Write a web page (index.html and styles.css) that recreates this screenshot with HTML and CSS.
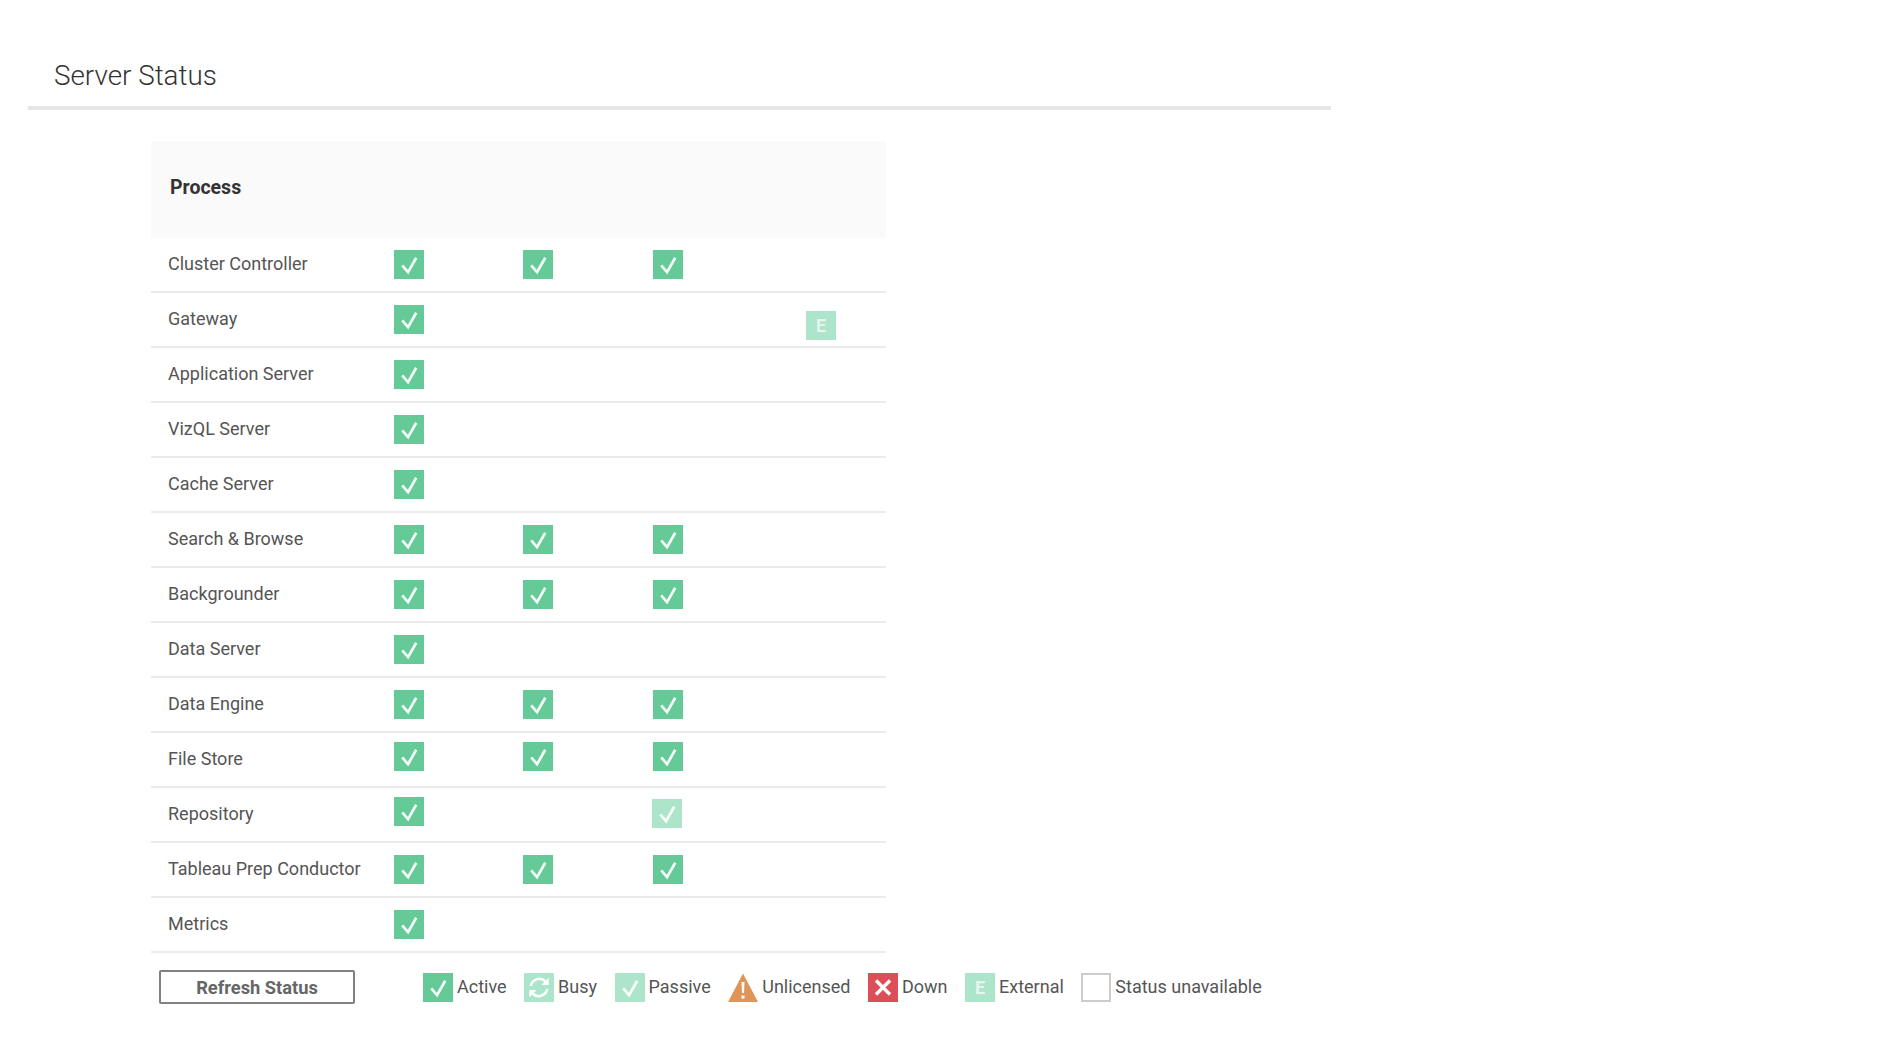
FILE: index.html
```html
<!DOCTYPE html>
<html lang="en">
<head>
    <meta charset="UTF-8">
    <title>Server Status</title>
    <link rel="stylesheet" href="styles.css">
</head>
<body>
    <svg class="defs" aria-hidden="true">
        <symbol id="tick" viewBox="0 0 30 30"><path d="M8 16 L14 23 L22.5 8" fill="none" stroke="#fff" stroke-opacity=".92" stroke-width="2.8"/></symbol>
    </svg>
    <header class="page-head">
        <h1>Server Status</h1>
    </header>
    <section class="status">
        <div class="table-head">Process</div>
        <div class="row">
            <span class="name">Cluster Controller</span>
            <svg class="box active"><use href="#tick"/></svg>
            <svg class="box active"><use href="#tick"/></svg>
            <svg class="box active"><use href="#tick"/></svg>
        </div>
        <div class="row">
            <span class="name">Gateway</span>
            <svg class="box active"><use href="#tick"/></svg>
            <span></span>
            <span></span>
            <div class="box external low">E</div>
        </div>
        <div class="row">
            <span class="name">Application Server</span>
            <svg class="box active"><use href="#tick"/></svg>
        </div>
        <div class="row">
            <span class="name">VizQL Server</span>
            <svg class="box active"><use href="#tick"/></svg>
        </div>
        <div class="row">
            <span class="name">Cache Server</span>
            <svg class="box active"><use href="#tick"/></svg>
        </div>
        <div class="row">
            <span class="name">Search &amp; Browse</span>
            <svg class="box active"><use href="#tick"/></svg>
            <svg class="box active"><use href="#tick"/></svg>
            <svg class="box active"><use href="#tick"/></svg>
        </div>
        <div class="row">
            <span class="name">Backgrounder</span>
            <svg class="box active"><use href="#tick"/></svg>
            <svg class="box active"><use href="#tick"/></svg>
            <svg class="box active"><use href="#tick"/></svg>
        </div>
        <div class="row">
            <span class="name">Data Server</span>
            <svg class="box active"><use href="#tick"/></svg>
        </div>
        <div class="row">
            <span class="name">Data Engine</span>
            <svg class="box active"><use href="#tick"/></svg>
            <svg class="box active"><use href="#tick"/></svg>
            <svg class="box active"><use href="#tick"/></svg>
        </div>
        <div class="row raised">
            <span class="name">File Store</span>
            <svg class="box active"><use href="#tick"/></svg>
            <svg class="box active"><use href="#tick"/></svg>
            <svg class="box active"><use href="#tick"/></svg>
        </div>
        <div class="row raised">
            <span class="name">Repository</span>
            <svg class="box active"><use href="#tick"/></svg>
            <span></span>
            <svg class="box passive nudge"><use href="#tick"/></svg>
        </div>
        <div class="row">
            <span class="name">Tableau Prep Conductor</span>
            <svg class="box active"><use href="#tick"/></svg>
            <svg class="box active"><use href="#tick"/></svg>
            <svg class="box active"><use href="#tick"/></svg>
        </div>
        <div class="row">
            <span class="name">Metrics</span>
            <svg class="box active"><use href="#tick"/></svg>
        </div>
    </section>
    <footer class="legend-bar">
        <button class="refresh" type="button">Refresh Status</button>
        <ul class="legend">
            <li><svg class="box active"><use href="#tick"/></svg>Active</li>
            <li>
                <svg class="box busy" viewBox="0 0 30 30">
                    <path d="M6.5 13.5 A9 9 0 0 1 21.5 8.5" fill="none" stroke="#fff" stroke-width="2.6"/>
                    <path d="M25 5 V12.5 H17.5 Z" fill="#fff"/>
                    <path d="M23.5 16.5 A9 9 0 0 1 8.5 21.5" fill="none" stroke="#fff" stroke-width="2.6"/>
                    <path d="M5 25 V17.5 H12.5 Z" fill="#fff"/>
                </svg>Busy
            </li>
            <li><svg class="box passive"><use href="#tick"/></svg>Passive</li>
            <li>
                <svg class="box" viewBox="0 0 30 29">
                    <path d="M15 0.5 L30 29 H0 Z" fill="#e09458"/>
                    <path d="M13.5 9 H16.5 L16 20 H14 Z M13.5 22.5 H16.5 V25.5 H13.5 Z" fill="#fff"/>
                </svg>Unlicensed
            </li>
            <li>
                <svg class="box down" viewBox="0 0 30 29">
                    <path d="M8 7.5 L22 21.5 M22 7.5 L8 21.5" fill="none" stroke="#fff" stroke-width="3.4"/>
                </svg>Down
            </li>
            <li><div class="box external">E</div>External</li>
            <li><div class="box blank"></div>Status unavailable</li>
        </ul>
    </footer>
</body>
</html>
```

FILE: styles.css
```css
* { margin: 0; padding: 0; box-sizing: border-box; }
body { font-family: Roboto, Arial, sans-serif; font-size: 18px; color: #555; background: #fff; }
.defs { display: none; }

.page-head { width: 1303px; height: 110px; margin-left: 28px; padding: 58px 0 0 26px; border-bottom: 4px solid #e6e6e6; }
.page-head h1 { font-size: 27.8px; line-height: 36px; font-weight: 300; color: #333; }

.status { width: 735px; margin: 31px 0 0 151px; }
.table-head { height: 97px; padding: 0 0 4px 19px; display: flex; align-items: center; background: #fafafa; font-size: 19.5px; font-weight: 700; color: #333; }
.row { height: 55px; display: grid; grid-template-columns: 243px 129px 130px 153px 30px; align-items: start; padding-top: 12px; border-bottom: 2px solid #ebebeb; }
.row.raised { padding-top: 9px; }
.name { padding-left: 17px; line-height: 24px; margin-top: 2px; }
.raised .name { margin-top: 5px; }

.box { display: block; flex: none; width: 30px; height: 29px; }
.active { background: #65c998; }
.busy, .passive, .external { background: #ade5ca; }
.nudge { margin: 2px 0 0 -1px; }
.low { margin-top: 6px; }
.external { color: #e4f6ed; font-size: 18px; font-weight: 700; text-align: center; line-height: 29px; }

.legend-bar { display: flex; align-items: flex-start; margin: 17px 0 0 159px; }
.refresh { width: 196px; height: 34px; background: #fff; border: 2px solid #808080; border-radius: 2px; font: 700 18.3px Roboto, Arial, sans-serif; color: #666; }
.legend { display: flex; gap: 17.5px; margin: 3px 0 0 68px; list-style: none; }
.legend li { display: flex; gap: 4px; line-height: 27px; }
.down { background: #dc4f59; }
.blank { background: #fff; border: 2px solid #ccc; }
```
